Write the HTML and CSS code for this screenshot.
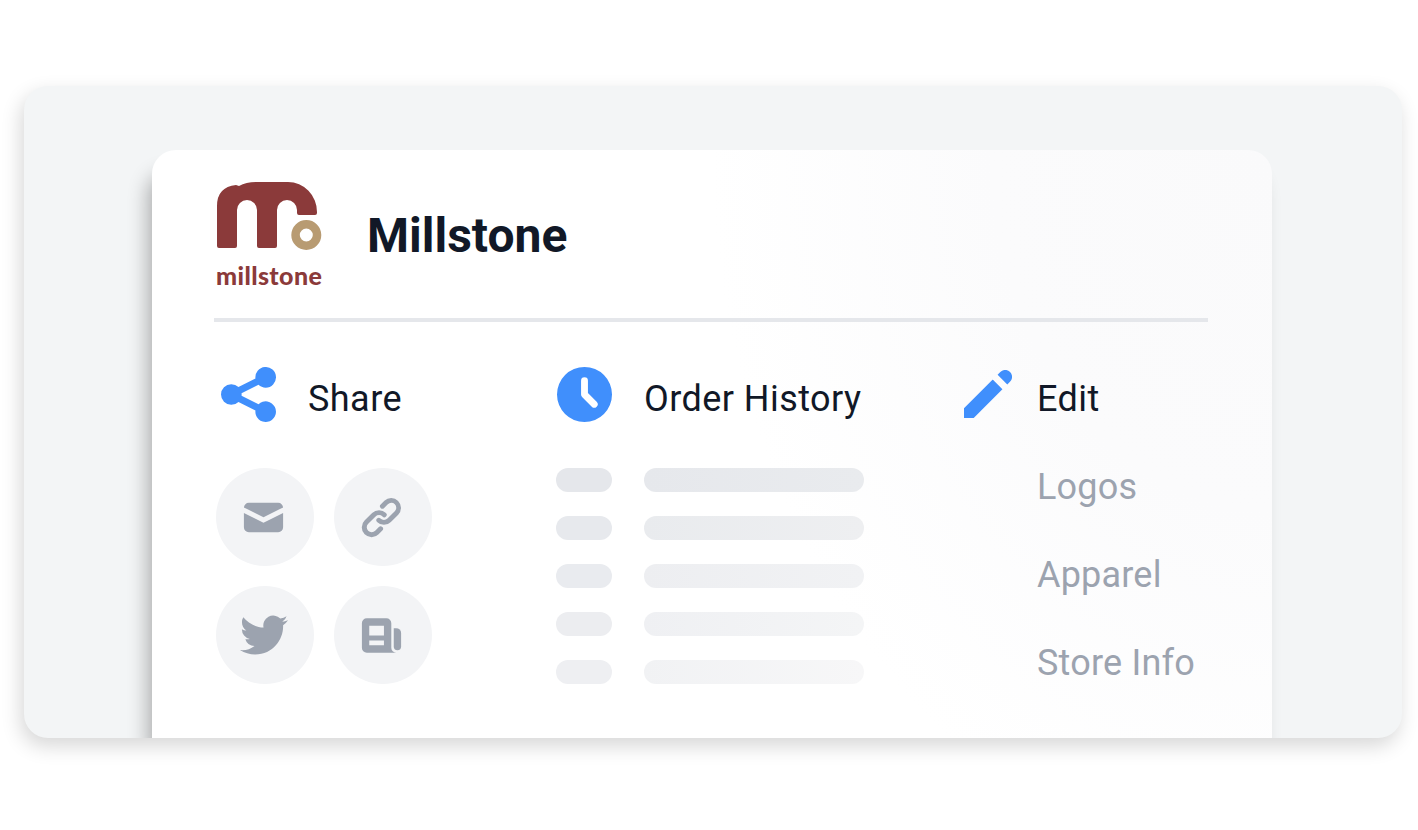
FILE: index.html
```html
<!DOCTYPE html>
<html lang="en">
<head>
<meta charset="UTF-8" />
<meta name="viewport" content="width=device-width, initial-scale=1" />
<title>Millstone</title>
<link rel="stylesheet" href="styles.css">
</head>
<body>
  <div class="panel">
    <div class="card">
      <div class="store-head">
        <div class="logo">
          <svg class="logo-mark" viewBox="216 182 106 68" width="106" height="68" aria-hidden="true">
            <path fill="#8b3a3a" d="M217 206Q217 187 236 185L239 186Q246 182 256 182L288 182A29 30 0 0 1 317 212L317 213Q317 215 315 215L299 215Q297 215 297 213L297 210A10 10 0 0 0 277 210L277 246Q277 248 275 248L259 248Q257 248 257 246L257 210A10 10 0 0 0 237 210L237 246Q237 248 235 248L219 248Q217 248 217 246Z"/>
            <circle cx="306.3" cy="235" r="10.75" fill="none" stroke="#b89b72" stroke-width="8.5"/>
          </svg>
          <span class="logo-word">millstone</span>
        </div>
        <h1>Millstone</h1>
      </div>

      <div class="columns">
        <section class="col col-share">
          <div class="col-head">
            <svg class="icon" viewBox="2 2 16 16" width="55" height="55" aria-hidden="true"><path d="M15 8a3 3 0 10-2.977-2.63l-4.94 2.47a3 3 0 100 4.319l4.94 2.47a3 3 0 10.895-1.789l-4.94-2.47a3.027 3.027 0 000-.74l4.94-2.47C13.456 7.68 14.19 8 15 8z"/></svg>
            <span>Share</span>
          </div>
          <div class="share-grid">
            <div class="round"><svg viewBox="0 0 20 20" width="49" height="49" aria-hidden="true"><path d="M2.003 5.884L10 9.882l7.997-3.998A2 2 0 0016 4H4a2 2 0 00-1.997 1.884z"/><path d="M18 8.118l-8 4-8-4V14a2 2 0 002 2h12a2 2 0 002-2V8.118z"/></svg></div>
            <div class="round"><svg viewBox="0 0 20 20" width="49" height="49" aria-hidden="true"><path fill-rule="evenodd" clip-rule="evenodd" d="M12.586 4.586a2 2 0 112.828 2.828l-3 3a2 2 0 01-2.828 0 1 1 0 00-1.414 1.414 4 4 0 005.656 0l3-3a4 4 0 00-5.656-5.656l-1.5 1.5a1 1 0 101.414 1.414l1.5-1.5zm-5 5a2 2 0 012.828 0 1 1 0 101.414-1.414 4 4 0 00-5.656 0l-3 3a4 4 0 105.656 5.656l1.5-1.5a1 1 0 10-1.414-1.414l-1.5 1.5a2 2 0 11-2.828-2.828l3-3z"/></svg></div>
            <div class="round"><svg viewBox="0 0 24 24" width="48" height="48" aria-hidden="true"><path d="M23.953 4.57a10 10 0 01-2.825.775 4.958 4.958 0 002.163-2.723c-.951.555-2.005.959-3.127 1.184a4.92 4.92 0 00-8.384 4.482C7.69 8.095 4.067 6.13 1.64 3.162a4.822 4.822 0 00-.666 2.475c0 1.71.87 3.213 2.188 4.096a4.904 4.904 0 01-2.228-.616v.06a4.923 4.923 0 003.946 4.827 4.996 4.996 0 01-2.212.085 4.936 4.936 0 004.604 3.417 9.867 9.867 0 01-6.102 2.105c-.39 0-.779-.023-1.17-.067a13.995 13.995 0 007.557 2.209c9.053 0 13.998-7.496 13.998-13.985 0-.21 0-.42-.015-.63A9.935 9.935 0 0024 4.59z"/></svg></div>
            <div class="round"><svg viewBox="0 0 20 20" width="49" height="49" aria-hidden="true"><path fill-rule="evenodd" clip-rule="evenodd" d="M2 5a2 2 0 012-2h8a2 2 0 012 2v10a2 2 0 002 2H4a2 2 0 01-2-2V5zm3 1h6v4H5V6zm6 6H5v2h6v-2z"/><path d="M15 7h1a2 2 0 012 2v5.5a1.5 1.5 0 01-3 0V7z"/></svg></div>
          </div>
        </section>

        <section class="col col-orders">
          <div class="col-head">
            <svg class="icon" viewBox="2 2 16 16" width="55" height="55" aria-hidden="true"><path fill-rule="evenodd" clip-rule="evenodd" d="M10 18a8 8 0 100-16 8 8 0 000 16zm1-12a1 1 0 10-2 0v4a1 1 0 00.293.707l2.828 2.829a1 1 0 101.415-1.415L11 9.586V6z"/></svg>
            <span>Order History</span>
          </div>
          <div class="order-rows">
            <div class="order-row row-1"><i class="bar bar-short"></i><i class="bar bar-long"></i></div>
            <div class="order-row row-2"><i class="bar bar-short"></i><i class="bar bar-long"></i></div>
            <div class="order-row row-3"><i class="bar bar-short"></i><i class="bar bar-long"></i></div>
            <div class="order-row row-4"><i class="bar bar-short"></i><i class="bar bar-long"></i></div>
            <div class="order-row row-5"><i class="bar bar-short"></i><i class="bar bar-long"></i></div>
          </div>
        </section>

        <section class="col col-edit">
          <div class="col-head">
            <svg class="icon" viewBox="3 3 14 14" width="48" height="48" aria-hidden="true"><path d="M13.586 3.586a2 2 0 112.828 2.828l-.793.793-2.828-2.828.793-.793zM11.379 5.793L3 14.172V17h2.828l8.38-8.379-2.83-2.828z"/></svg>
            <span>Edit</span>
          </div>
          <ul class="edit-list">
            <li>Logos</li>
            <li>Apparel</li>
            <li>Store Info</li>
          </ul>
        </section>
      </div>
    </div>
  </div>
</body>
</html>
```

FILE: styles.css
```css
* {
  box-sizing: border-box;
}

html, body {
  height: 100%;
}

body {
  margin: 0;
  background: #fff;
  font-family: Roboto, "Liberation Sans", sans-serif;
  color: #111827;
  overflow: hidden;
}

.panel {
  width: 1378px;
  height: 652px;
  margin: 86px 0 0 24px;
  padding: 64px 130px 0 128px;
  background: #f3f5f6;
  border-radius: 24px;
  box-shadow: -3px 8px 20px rgba(0,0,0,0.16);
  overflow: hidden;
}

.card {
  height: 588px;
  padding: 32px 64px 0 62px;
  background: radial-gradient(ellipse 560px 720px at 100% 0, #fafafb 0, #fbfbfc 50%, #fff 100%);
  border-radius: 24px 24px 0 0;
  box-shadow: -8px 20px 20px -4px rgba(0,0,0,0.3);
}

.store-head {
  display: flex;
  align-items: flex-start;
  gap: 45px;
  height: 140px;
  padding-left: 2px;
  border-bottom: 4px solid #e5e7eb;
}

.logo {
  display: flex;
  flex-direction: column;
  width: 106px;
}

.logo-mark {
  display: block;
}

.logo-word {
  margin-top: 10px;
  font-family: Lato, sans-serif;
  font-size: 25px;
  font-weight: 900;
  line-height: 30px;
  letter-spacing: 0.4px;
  color: #8b3a3a;
  white-space: nowrap;
}

h1 {
  margin: 22px 0 0;
  font-size: 48px;
  font-weight: 700;
  line-height: 64px;
  color: #111827;
}

.columns {
  display: flex;
  padding: 44px 0 0 2px;
}

.col-share {
  width: 340px;
}

.col-orders {
  width: 408px;
}

.col-head {
  display: flex;
  align-items: center;
  height: 56px;
  font-size: 36px;
  line-height: 40px;
  letter-spacing: 0.45px;
}

.col-head span {
  position: relative;
  top: 5px;
}

.icon {
  fill: #408ffc;
  flex: none;
}

.col-share .col-head {
  gap: 32px;
  padding-left: 5px;
}

.col-orders .col-head {
  gap: 32px;
  padding-left: 1px;
}

.col-edit .col-head {
  gap: 25px;
}

.share-grid {
  display: grid;
  grid-template-columns: 98px 98px;
  gap: 20px;
  margin-top: 46px;
}

.round {
  display: flex;
  align-items: center;
  justify-content: center;
  width: 98px;
  height: 98px;
  padding-right: 3px;
  border-radius: 50%;
  background: #f3f4f6;
}

.round svg {
  fill: #9ca3af;
}

.order-rows {
  display: flex;
  flex-direction: column;
  gap: 24px;
  margin-top: 46px;
}

.order-row {
  display: flex;
  gap: 32px;
}

.bar {
  display: block;
  height: 24px;
  border-radius: 12px;
}

.bar-short {
  width: 56px;
}

.bar-long {
  width: 220px;
}

/* the rows wash out towards the bottom right */
.row-1 .bar-short { background: #e5e7eb; }
.row-1 .bar-long { background: linear-gradient(to right, #e6e8ec, #e9ebee); }
.row-2 .bar-short { background: #e7e9ed; }
.row-2 .bar-long { background: linear-gradient(to right, #e9ebee, #eeeff1); }
.row-3 .bar-short { background: #e9ebef; }
.row-3 .bar-long { background: linear-gradient(to right, #edeef1, #f1f2f4); }
.row-4 .bar-short { background: #ecedf0; }
.row-4 .bar-long { background: linear-gradient(to right, #eff0f3, #f4f5f6); }
.row-5 .bar-short { background: #eeeff2; }
.row-5 .bar-long { background: linear-gradient(to right, #f1f2f4, #f7f7f8); }

.edit-list {
  list-style: none;
  margin: 45px 0 0;
  padding: 0 0 0 73px;
  display: flex;
  flex-direction: column;
  gap: 48px;
  font-size: 36px;
  line-height: 40px;
  letter-spacing: 0.2px;
  color: #9ca3af;
}
```
